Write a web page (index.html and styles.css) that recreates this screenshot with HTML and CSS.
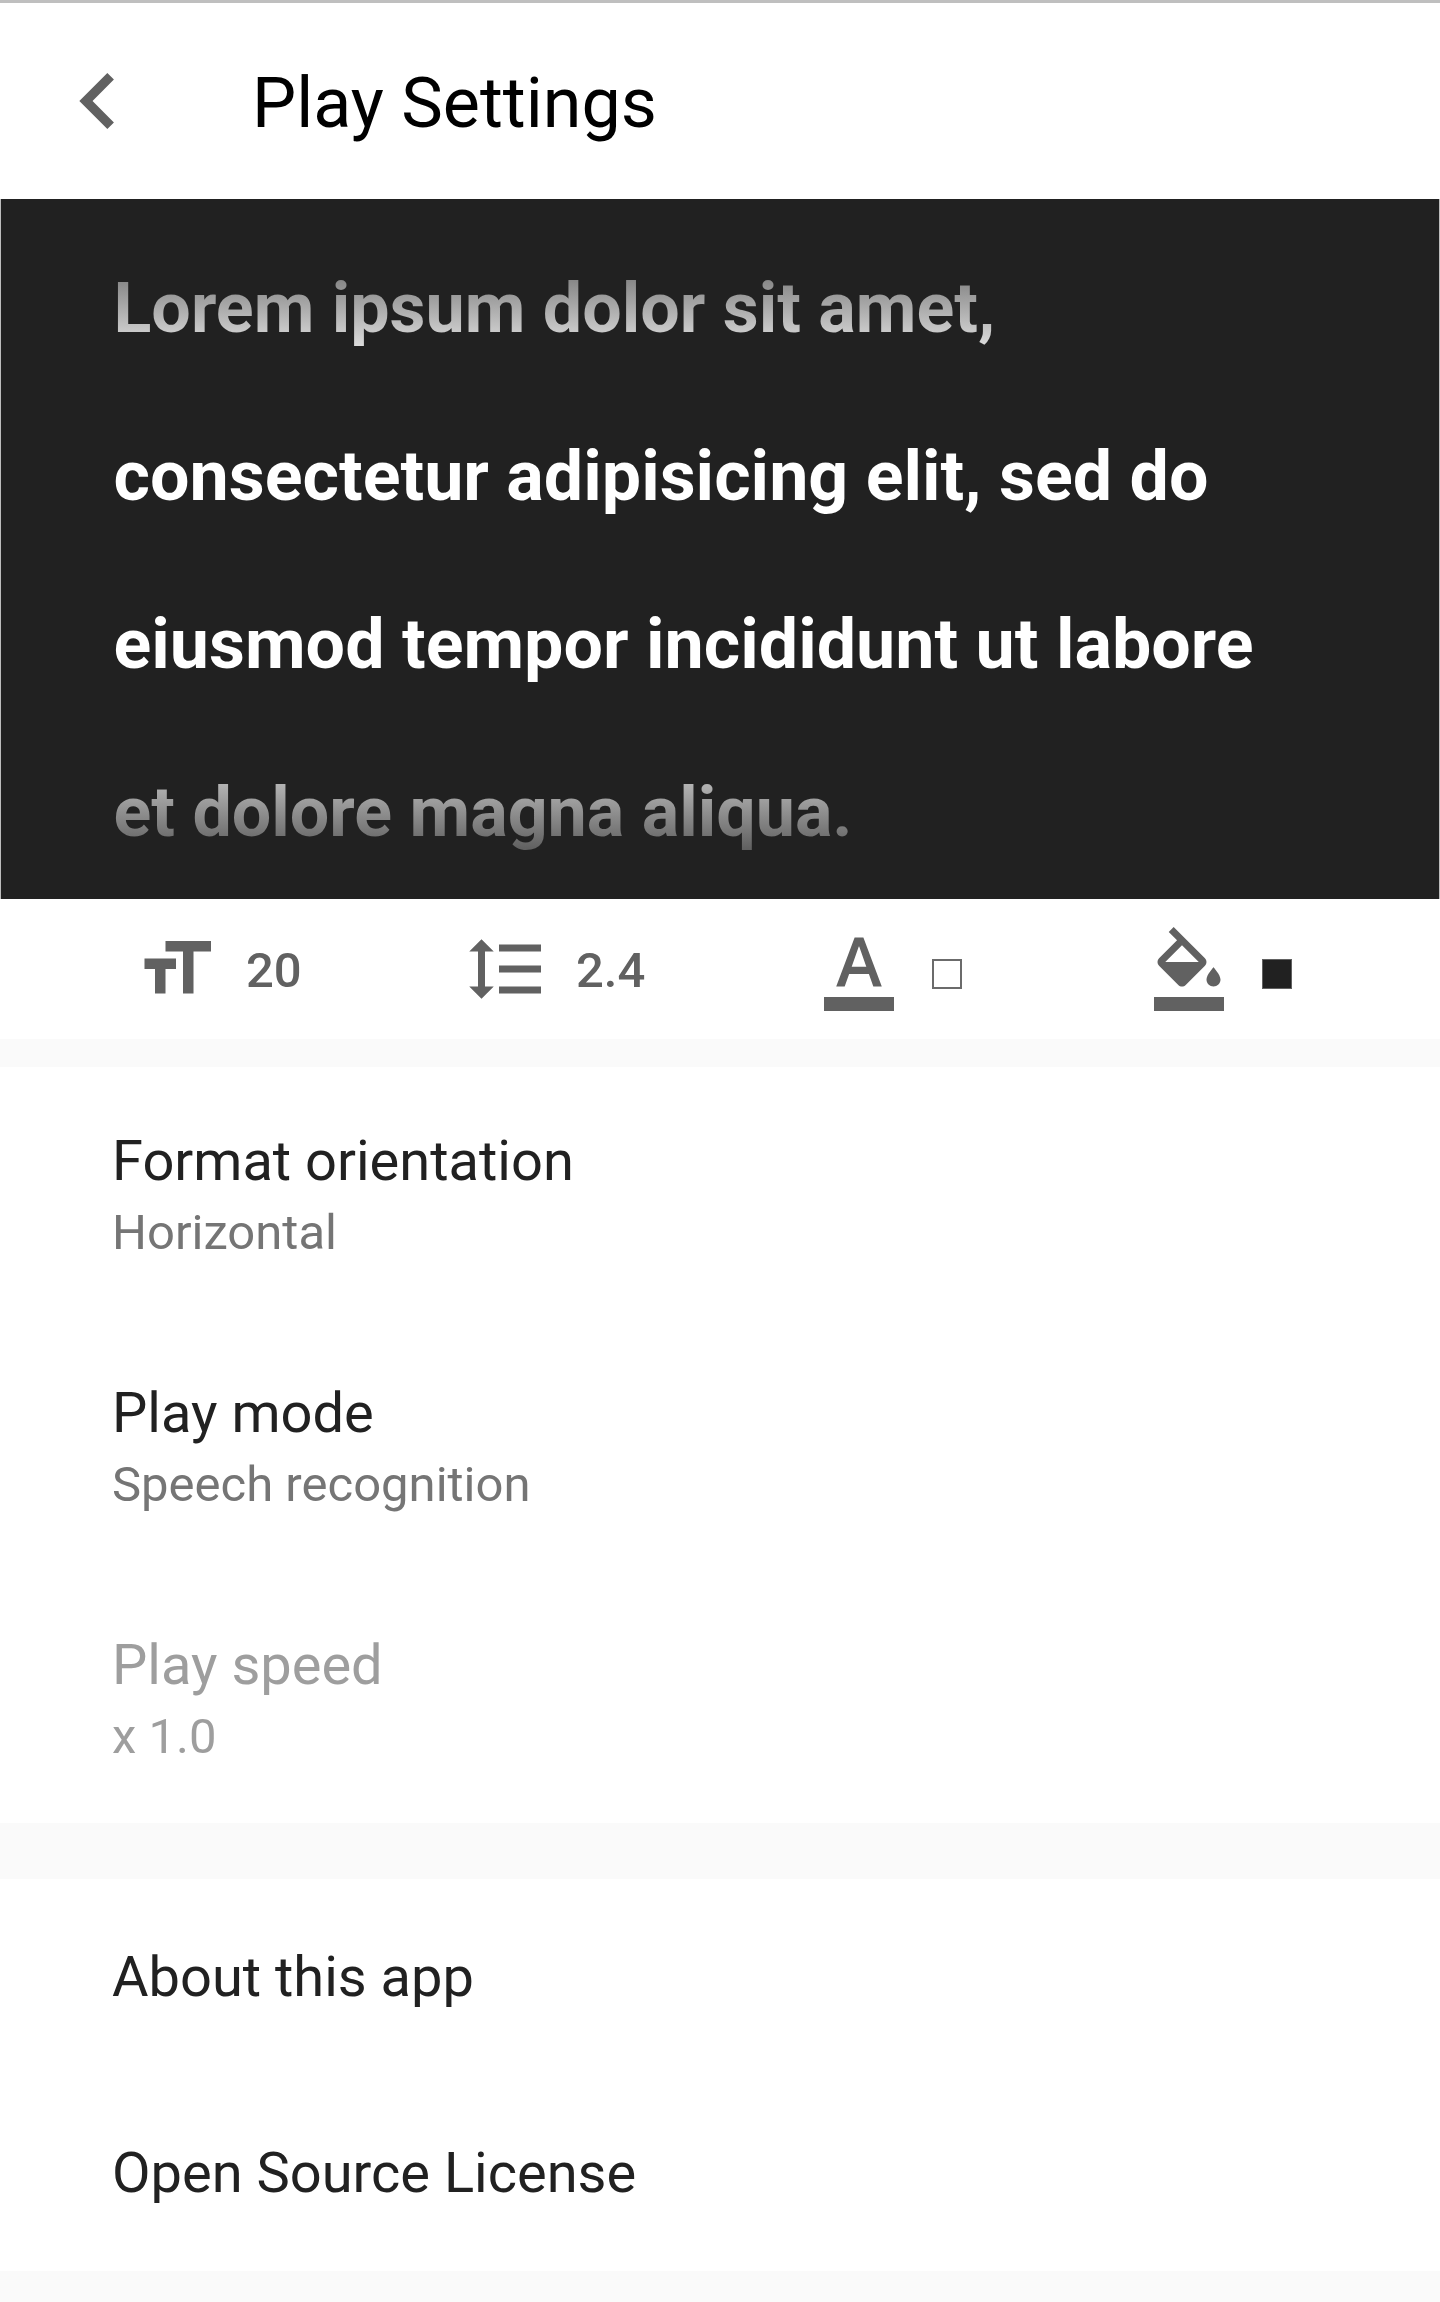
FILE: index.html
```html
<!DOCTYPE html>
<html lang="en">
<head>
<meta charset="utf-8">
<title>Play Settings</title>
<link rel="stylesheet" href="styles.css">
</head>
<body>
<header class="app-bar">
  <svg class="back" viewBox="0 0 24 24"><path d="M15.41 7.41 14 6l-6 6 6 6 1.41-1.41L10.83 12z"/></svg>
  <h1 class="title">Play Settings</h1>
</header>
<section class="preview">
  <p class="preview-text">Lorem ipsum dolor sit amet,<br>consectetur adipisicing elit, sed do<br>eiusmod tempor incididunt ut labore<br>et dolore magna aliqua.</p>
</section>
<section class="tools">
  <div class="tool">
    <svg class="icon" viewBox="0 0 24 24"><path d="M9 4v3h5v12h3V7h5V4H9zm-6 8h3v7h3v-7h3V9H3v3z"/></svg>
    <span class="value">20</span>
  </div>
  <div class="tool tool-spacing">
    <svg class="icon" viewBox="0 0 24 24"><path d="M6 7h2.5L5 3.5 1.5 7H4v10H1.5L5 20.5 8.5 17H6V7zm4-2v2h12V5H10zm0 14h12v-2H10v2zm0-6h12v-2H10v2z"/></svg>
    <span class="value">2.4</span>
  </div>
  <div class="tool">
    <svg class="icon" viewBox="0 0 24 24"><path d="M2 20h20v4H2v-4zm3.49-3h2.42l1.27-3.58h5.65L16.09 17h2.42L13.25 3h-2.5L5.49 17zm4.42-5.61 2.03-5.79h.12l2.03 5.79H9.91z"/></svg>
    <span class="swatch"></span>
  </div>
  <div class="tool tool-fill">
    <svg class="icon" viewBox="0 0 24 24"><path d="M16.56 8.94 7.62 0 6.21 1.41l2.38 2.38-5.15 5.15c-.59.59-.59 1.54 0 2.12l5.5 5.5c.29.29.68.44 1.06.44s.77-.15 1.06-.44l5.5-5.5c.59-.58.59-1.53 0-2.12zM5.21 10 10 5.21 14.79 10H5.21zM19 11.5s-2 2.17-2 3.5c0 1.1.9 2 2 2s2-.9 2-2c0-1.33-2-3.5-2-3.5zM2 20h20v4H2v-4z"/></svg>
    <span class="swatch swatch-dark"></span>
  </div>
</section>
<section class="group">
  <div class="item"><div class="name">Format orientation</div><div class="detail">Horizontal</div></div>
  <div class="item"><div class="name">Play mode</div><div class="detail">Speech recognition</div></div>
  <div class="item disabled"><div class="name">Play speed</div><div class="detail">x 1.0</div></div>
</section>
<section class="group group-about">
  <div class="item item-single"><div class="name">About this app</div></div>
  <div class="item item-single"><div class="name">Open Source License</div></div>
</section>
</body>
</html>
```
FILE: styles.css
```css
* {
  box-sizing: border-box;
}

body {
  margin: 0;
  min-height: 2302px;
  background: #fafafa;
  color: #212121;
  font-family: Roboto, sans-serif;
}

.app-bar {
  display: flex;
  align-items: center;
  height: 199px;
  padding-left: 42px;
  border-top: 3px solid #bfbfbf;
  background: #fff;
}

.back {
  width: 112px;
  height: 112px;
  fill: #616161;
}

.title {
  margin: 3px 0 0 98px;
  color: #000;
  font-size: 70px;
  font-weight: 400;
  line-height: 82px;
}

.preview {
  height: 700px;
  padding: 25px 0 0 112.5px;
  border: solid #bdbdbd;
  border-width: 0 1px;
  background: #212121;
}

.preview-text {
  height: 675px;
  margin: 0;
  color: transparent;
  background: linear-gradient(#404040, #fff 150px, #fff 500px, #212121 675px);
  background-clip: text;
  -webkit-background-clip: text;
  font-size: 70px;
  font-weight: 700;
  line-height: 168px;
}

.tools {
  display: flex;
  height: 140px;
  padding-left: 134px;
  background: #fff;
}

.tool {
  display: flex;
  flex: none;
  align-items: center;
  width: 330px;
}

.tool-spacing {
  width: 352.5px;
}

.tool-fill {
  width: auto;
}

.icon {
  width: 84px;
  height: 84px;
  fill: #616161;
}

.value {
  margin: 3px 0 0 28px;
  color: #616161;
  font-size: 49px;
  font-weight: 500;
  line-height: 58px;
}

.swatch {
  width: 30px;
  height: 30px;
  margin: 9px 0 0 31.5px;
  border: 2px solid #6b6b6b;
  background: #fff;
}

.swatch-dark {
  border: 1px solid #616161;
  background: #212121;
}

.group {
  margin-top: 28px;
  background: #fff;
}

.group-about {
  margin-top: 56px;
}

.item {
  height: 252px;
  padding: 61px 112px 0;
}

.item-single {
  display: flex;
  align-items: center;
  height: 196px;
  padding-top: 0;
}

.name {
  font-size: 56px;
  line-height: 66px;
}

.detail {
  margin-top: 10px;
  color: #757575;
  font-size: 49px;
  line-height: 58px;
}

.disabled .name,
.disabled .detail {
  color: #9e9e9e;
}
```
